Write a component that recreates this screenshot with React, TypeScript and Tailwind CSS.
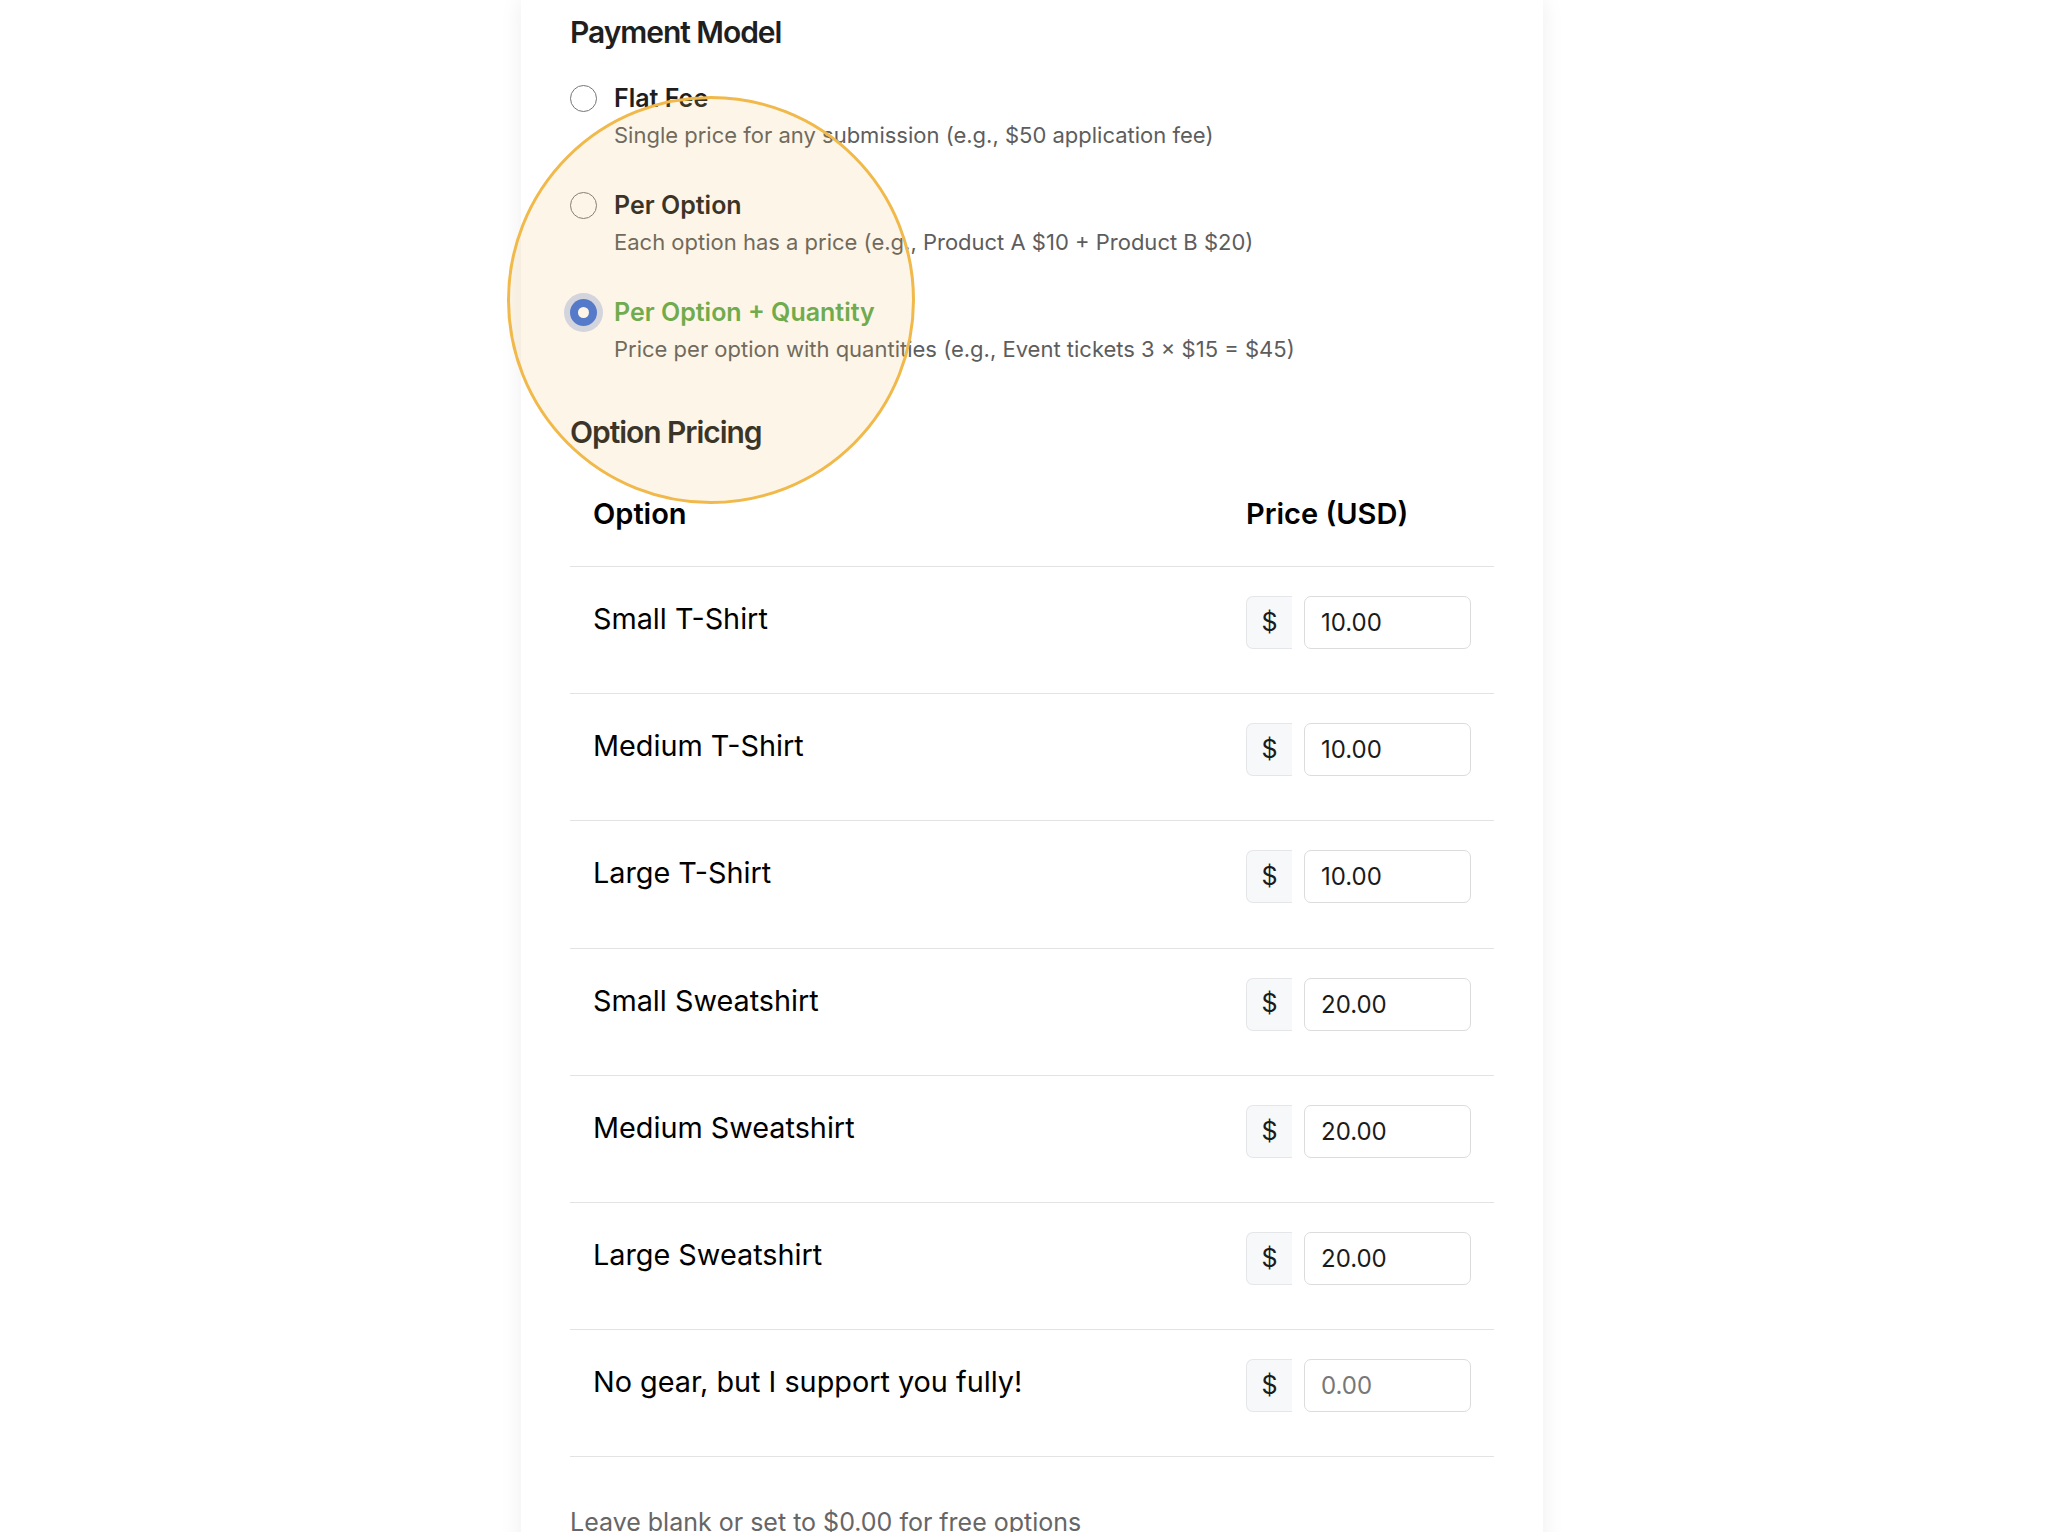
import React, { useState } from 'react';

interface PricingOption {
  id: string;
  label: string;
  price: string;
}

const paymentModels = [
  { id: 'flat', label: 'Flat Fee', description: 'Single price for any submission (e.g., $50 application fee)' },
  { id: 'per-option', label: 'Per Option', description: 'Each option has a price (e.g., Product A $10 + Product B $20)' },
  { id: 'per-option-qty', label: 'Per Option + Quantity', description: 'Price per option with quantities (e.g., Event tickets 3 × $15 = $45)' },
];

const initialOptions: PricingOption[] = [
  { id: 'small-tee', label: 'Small T-Shirt', price: '10.00' },
  { id: 'medium-tee', label: 'Medium T-Shirt', price: '10.00' },
  { id: 'large-tee', label: 'Large T-Shirt', price: '10.00' },
  { id: 'small-sweat', label: 'Small Sweatshirt', price: '20.00' },
  { id: 'medium-sweat', label: 'Medium Sweatshirt', price: '20.00' },
  { id: 'large-sweat', label: 'Large Sweatshirt', price: '20.00' },
  { id: 'support', label: 'No gear, but I support you fully!', price: '' },
];

function Radio({ checked }: { checked: boolean }) {
  if (checked) {
    return (
      <span className="flex h-[27px] w-[27px] shrink-0 items-center justify-center rounded-full bg-[#3b6fdb] shadow-[0_0_0_6px_#cfd8f1]">
        <span className="h-[11px] w-[11px] rounded-full bg-white" />
      </span>
    );
  }
  return <span className="h-[27px] w-[27px] shrink-0 rounded-full border-[1.5px] border-[#767676] bg-white" />;
}

export default function App() {
  const [model, setModel] = useState('per-option-qty');
  const [options, setOptions] = useState(initialOptions);

  const updatePrice = (id: string, price: string) => {
    setOptions((prev) => prev.map((o) => (o.id === id ? { ...o, price } : o)));
  };

  return (
    <div className="min-h-screen bg-white font-['Inter','Noto_Sans',sans-serif] text-[#1b1b1b]">
      <div className="relative mx-auto w-[1022px] bg-white px-[49px] pt-[15px] pb-10 shadow-[0_0_22px_rgba(0,0,0,0.07)]">
        <h2 className="text-[30px] font-semibold leading-[34px] tracking-[-0.035em] text-[#1f1f1f]">Payment Model</h2>

        <div className="mt-[34px] flex flex-col gap-[40px]">
          {paymentModels.map((m) => {
            const active = model === m.id;
            return (
              <button key={m.id} className="text-left" onClick={() => setModel(m.id)}>
                <div className="flex items-center gap-[17px]">
                  <Radio checked={active} />
                  <span
                    className={
                      active
                        ? 'text-[25px] font-semibold leading-[30px] text-[#5ba84b]'
                        : 'text-[25px] font-semibold leading-[30px] text-[#1e1e1e]'
                    }
                  >
                    {m.label}
                  </span>
                </div>
                <p className="mt-[7px] pl-[44px] text-[22px] leading-[30px] text-[#5d5d5d]">{m.description}</p>
              </button>
            );
          })}
        </div>

        <h2 className="mt-[51px] text-[30px] font-semibold leading-[34px] tracking-[-0.035em] text-[#1f1f1f]">Option Pricing</h2>

        <div className="mt-[47px]">
          <div className="flex border-b border-[#e3e3e3] px-[23px] pb-[34px] text-[29px] font-semibold leading-[36px] text-black">
            <div className="flex-1">Option</div>
            <div className="w-[225px]">Price (USD)</div>
          </div>
          {options.map((o) => (
            <div key={o.id} className="flex h-[127.2px] items-start border-b border-[#e3e3e3] px-[23px] pt-[29px]">
              <div className="mt-[5px] flex-1 text-[28.8px] leading-[36px] text-black">{o.label}</div>
              <div className="flex w-[225px] gap-[12px]">
                <span className="flex h-[53px] w-[47px] items-center justify-center rounded-l-[7px] border border-r-0 border-[#e4e6ea] bg-[#f7f8fa] text-[25px] text-[#1b1b1b]">
                  $
                </span>
                <input
                  value={o.price}
                  placeholder="0.00"
                  onChange={(e) => updatePrice(o.id, e.target.value)}
                  className="h-[53px] w-[167px] rounded-[7px] border border-[#dcdcdc] bg-white px-[16px] text-[24px] text-[#1b1b1b] outline-none placeholder:text-[#777]"
                />
              </div>
            </div>
          ))}
        </div>

        <p className="mt-[50px] text-[25px] leading-[30px] text-[#666]">Leave blank or set to $0.00 for free options</p>

        {/* highlight lens over the selected payment model */}
        <div className="pointer-events-none absolute left-[-14px] top-[96px] h-[408px] w-[408px] rounded-full border-[3px] border-[#f1b84a] bg-[rgba(240,190,90,0.14)]" />
      </div>
    </div>
  );
}
